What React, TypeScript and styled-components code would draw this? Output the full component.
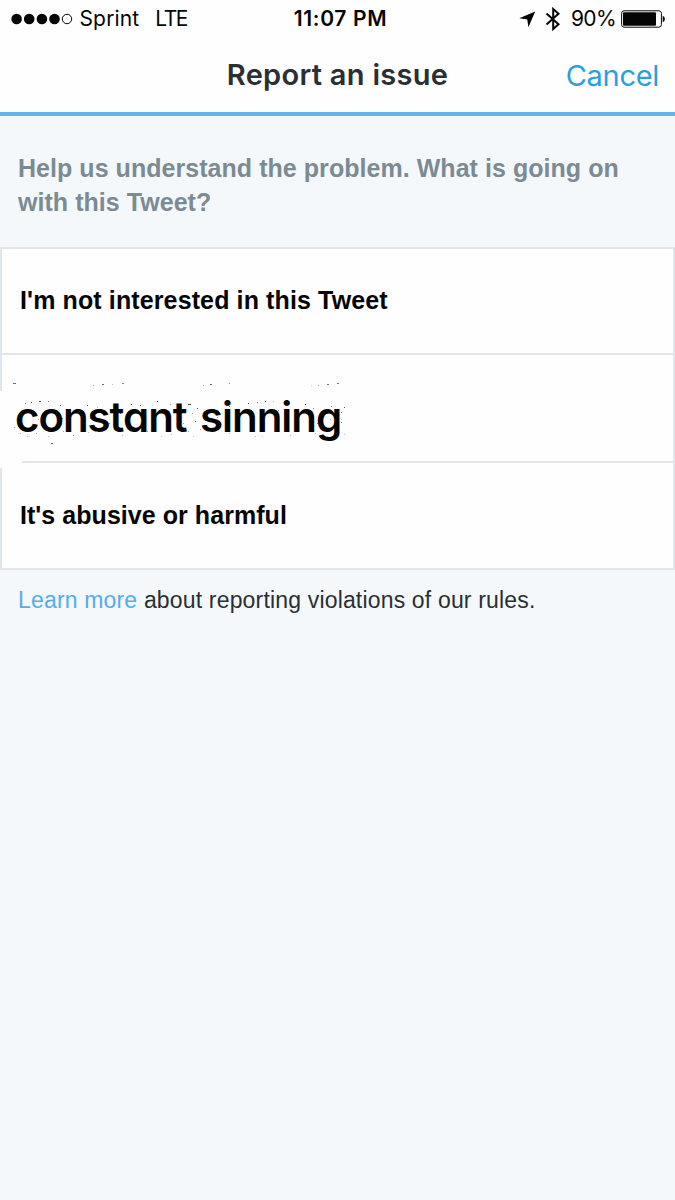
import React from 'react';
import styled, { createGlobalStyle } from 'styled-components';

const GlobalStyle = createGlobalStyle`
  *, *::before, *::after { box-sizing: border-box; }
  html, body { margin: 0; padding: 0; background: #f4f8fb; }
`;

const Screen = styled.main`
  width: 675px;
  height: 1200px;
  overflow: hidden;
  background: #f4f8fb;
  font-family: 'Liberation Sans', Arial, sans-serif;
  color: #292f33;
  white-space: nowrap;
`;

const Header = styled.header`
  height: 116px;
  background: #fefefe;
  border-bottom: 4px solid #64b5ec;
  font-family: Inter, sans-serif;
`;

const StatusBar = styled.div`
  display: grid;
  grid-template-columns: 1fr auto 1fr;
  align-items: center;
  height: 38px;
  padding: 0 10px 0 11px;
  color: #050505;
  font-size: 21px;
  line-height: 38px;
`;

const StatusGroup = styled.div<{ $end?: boolean }>`
  display: flex;
  align-items: center;
  justify-content: ${(p) => (p.$end ? 'flex-end' : 'flex-start')};
`;

const StatusText = styled.span<{ $gap?: number; $spacing?: number; $weight?: number }>`
  margin-left: ${(p) => p.$gap ?? 0}px;
  letter-spacing: ${(p) => p.$spacing ?? 0}px;
  font-weight: ${(p) => p.$weight ?? 400};
`;

const Icon = styled.svg<{ $gap?: number }>`
  display: block;
  flex: none;
  margin-left: ${(p) => p.$gap ?? 0}px;
`;

const TitleBar = styled.div`
  display: grid;
  grid-template-columns: 1fr auto 1fr;
  align-items: center;
  height: 74px;
  padding: 0 16px;
`;

const Title = styled.h1`
  grid-column: 2;
  margin: 0;
  font-size: 29px;
  font-weight: 600;
  line-height: 74px;
  letter-spacing: 0.28px;
`;

const Cancel = styled.button`
  justify-self: end;
  padding: 2px 0 0;
  border: 0;
  background: none;
  color: #2a9fdf;
  font: 400 29px/72px Inter, sans-serif;
  letter-spacing: -0.3px;
`;

const Prompt = styled.p`
  margin: 0;
  padding: 35px 18px 27px;
  height: 131px;
  color: #7c8a94;
  font-size: 25px;
  font-weight: 700;
  line-height: 34px;
  letter-spacing: 0.045px;
`;

const Options = styled.ul`
  margin: 0;
  padding: 0;
  list-style: none;
`;

const Option = styled.li<{ $height: number }>`
  position: relative;
  display: flex;
  align-items: center;
  height: ${(p) => p.$height}px;
  padding: 0 0 1px 18px;
  border: 2px solid #e1e6ec;
  border-bottom-width: 0;
  background: #fefefe;
  color: #050505;
  font-size: 25px;
  font-weight: 700;
  letter-spacing: 0.12px;

  &:last-child { border-bottom-width: 2px; letter-spacing: 0.05px; }
`;

const Handwritten = styled.span`
  font: 600 42px/60px Inter, sans-serif;
  font-feature-settings: 'cv11' 1;
  letter-spacing: -1.05px;
  word-spacing: 4px;
  margin: 18px 0 0 -5px;
`;

const Patch = styled.span`
  position: absolute;
  left: -2px;
  top: 36px;
  width: 24px;
  height: 78px;
  background: #fefefe;
  clip-path: polygon(0 0, 4px 0, 4px 68px, 22px 68px, 22px 72px, 4px 72px, 4px 77px, 0 77px);
  z-index: 1;
`;

const Specks = styled.svg`
  position: absolute;
  left: -2px;
  top: -2px;
`;

const Footnote = styled.p`
  margin: 0;
  padding: 13px 18px;
  font-size: 23px;
  line-height: 34px;
  letter-spacing: 0.17px;
`;

const Link = styled.a`
  color: #55acee;
`;

// Ink specks around the lettering: x, y, opacity, width.
const specks: [number, number, number, number?][] = [
  [13, 31, 0.6, 3], [93, 33, 0.4], [102, 32, 0.6, 2], [112, 32, 0.3], [122, 31, 0.5, 2], [203, 33, 0.4], [210, 32, 0.6, 2],
  [229, 31, 0.5], [318, 33, 0.4], [327, 32, 0.6, 2], [337, 31, 0.6, 2], [311, 33, 0.2],
  [25, 51, 0.6], [31, 50, 0.7], [39, 49, 0.8, 2], [48, 49, 0.6], [60, 53, 0.6], [87, 53, 0.7], [97, 55, 0.3], [131, 52, 0.8],
  [140, 53, 0.6], [157, 49, 0.8], [170, 52, 0.4], [188, 52, 0.8, 3], [197, 56, 0.7], [248, 51, 0.8], [257, 50, 0.5], [265, 49, 0.6],
  [273, 49, 0.3], [229, 54, 0.6], [305, 52, 0.8], [331, 54, 0.5], [344, 55, 0.7], [341, 60, 0.5], [278, 58, 0.5], [313, 56, 0.5],
  [14, 75, 0.4], [20, 81, 0.3], [27, 84, 0.3], [36, 81, 0.4], [38, 67, 0.4], [51, 91, 0.7, 2], [48, 84, 0.3], [62, 66, 0.5],
  [63, 79, 0.4], [73, 83, 0.5], [88, 80, 0.3], [90, 66, 0.5], [109, 71, 0.5], [120, 61, 0.6], [121, 76, 0.4], [122, 83, 0.3],
  [145, 69, 0.4], [147, 79, 0.4], [161, 84, 0.3], [171, 82, 0.3], [183, 71, 0.4], [188, 79, 0.4], [192, 61, 0.4], [195, 69, 0.6],
  [193, 84, 0.3], [200, 77, 0.4], [217, 65, 0.4], [226, 72, 0.4], [229, 81, 0.3], [252, 66, 0.4], [255, 84, 0.3], [278, 73, 0.5],
  [288, 67, 0.4], [290, 83, 0.3], [317, 71, 0.5], [315, 81, 0.3], [341, 70, 0.5], [344, 82, 0.3], [330, 67, 0.3], [262, 84, 0.2],
];

export default function App() {
  return (
    <>
      <GlobalStyle />
      <Screen>
        <Header>
          <StatusBar>
            <StatusGroup>
              <Icon width="62" height="12" viewBox="0 0 62 12">
                {[5.6, 18.2, 30.9, 43.5].map((x) => <circle key={x} cx={x} cy="6" r="5.3" fill="#050505" />)}
                <circle cx="56" cy="6" r="4.7" fill="none" stroke="#050505" />
              </Icon>
              <StatusText $gap={6.5} $spacing={0.15}>Sprint</StatusText>
              <StatusText $gap={16} $spacing={-1.5}>LTE</StatusText>
            </StatusGroup>
            <StatusText $weight={600} $spacing={0.65} $gap={5}>11:07 PM</StatusText>
            <StatusGroup $end>
              <Icon width="17" height="17" viewBox="0 0 17 17">
                <path d="M16.2 .5 9.4 16.3 8.3 8.5 .3 7.3Z" fill="#050505" />
              </Icon>
              <Icon $gap={9} width="16" height="24" viewBox="0 0 16 24">
                <path d="M1.5 6.4 13.5 17.2 8.2 22V2l5.3 4.8L1.5 17.6" fill="none" stroke="#050505" strokeWidth="2" />
              </Icon>
              <StatusText $gap={10} $spacing={-0.6}>90%</StatusText>
              <Icon $gap={5} width="44" height="18" viewBox="0 0 44 18">
                <rect x=".6" y=".8" width="39.8" height="16.4" rx="2.5" fill="none" stroke="#050505" strokeWidth="1" />
                <rect x="2" y="2.3" width="33" height="13.4" rx="1" fill="#050505" />
                <path d="M41.7 5.7q2.2.8 2.2 3.3t-2.2 3.3Z" fill="#050505" />
              </Icon>
            </StatusGroup>
          </StatusBar>
          <TitleBar>
            <Title>Report an issue</Title>
            <Cancel>Cancel</Cancel>
          </TitleBar>
        </Header>
        <Prompt>
          Help us understand the problem. What is going on<br />with this Tweet?
        </Prompt>
        <Options>
          <Option $height={106}>I'm not interested in this Tweet</Option>
          <Option $height={108}>
            <Specks width="350" height="100" viewBox="0 0 350 100">
              {specks.map(([x, y, o, w = 1], i) => (
                <rect key={i} x={x} y={y - 1} width={w} height="1" fill="#111" opacity={o} />
              ))}
            </Specks>
            <Handwritten>constant sinning</Handwritten>
            <Patch />
          </Option>
          <Option $height={109}>It's abusive or harmful</Option>
        </Options>
        <Footnote>
          <Link>Learn more</Link> about reporting violations of our rules.
        </Footnote>
      </Screen>
    </>
  );
}
